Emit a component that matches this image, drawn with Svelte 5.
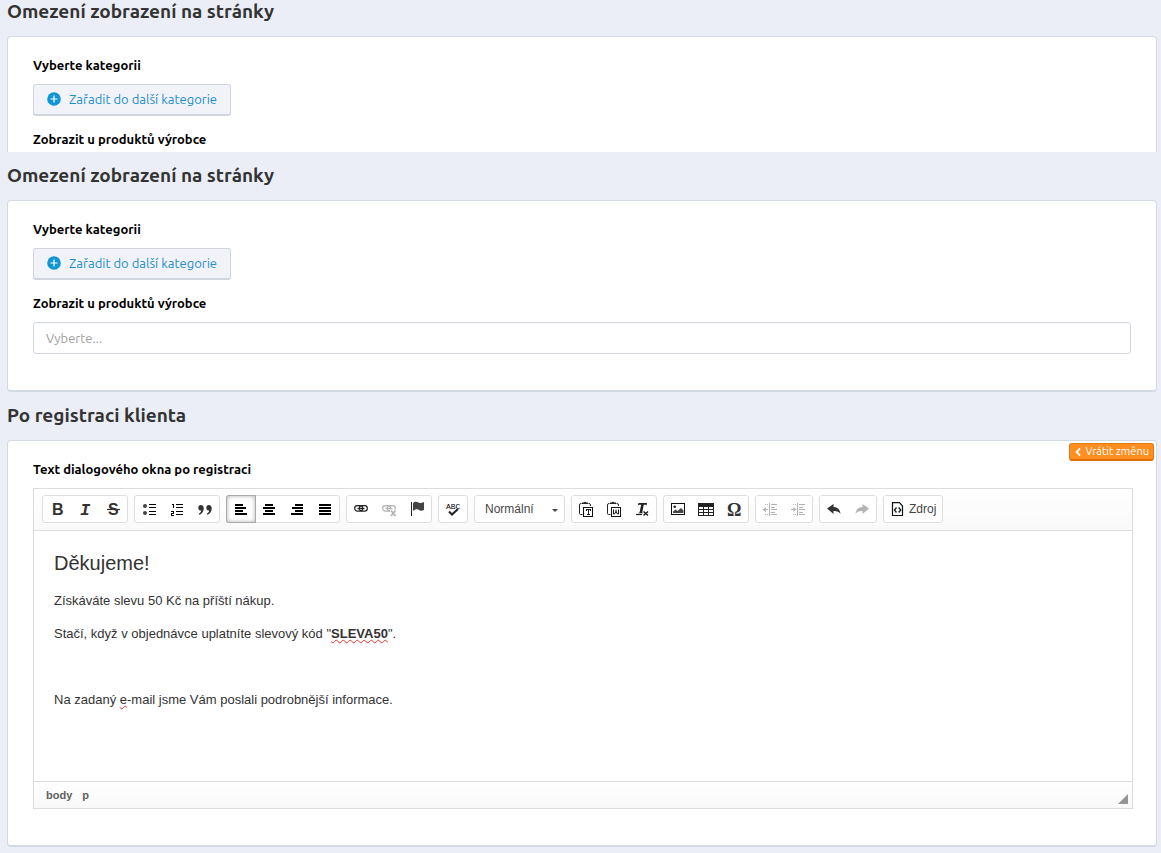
<script>
  const groups = [
    [['bold', 'Tučné'], ['italic', 'Kurzíva'], ['strike', 'Přeškrtnuté']],
    [['bullets', 'Odrážky'], ['numbers', 'Číslování'], ['quote', 'Citace']],
    [['left', 'Zarovnat vlevo'], ['center', 'Zarovnat na střed'], ['right', 'Zarovnat vpravo'], ['justify', 'Zarovnat do bloku']],
    [['link', 'Odkaz'], ['unlink', 'Odstranit odkaz', true], ['flag', 'Záložka']],
    [['spell', 'Kontrola pravopisu']],
    'format',
    [['pasteText', 'Vložit jako čistý text'], ['pasteWord', 'Vložit z Wordu'], ['clear', 'Odstranit formátování']],
    [['image', 'Obrázek'], ['table', 'Tabulka'], ['omega', 'Speciální znaky']],
    [['outdent', 'Zmenšit odsazení', true], ['indent', 'Zvětšit odsazení', true]],
    [['undo', 'Zpět'], ['redo', 'Znovu', true]],
    'source'
  ];
  const bars = {
    left: [[2, 8], [2, 11], [2, 8], [2, 12]],
    center: [[4, 8], [2, 12], [4, 8], [2, 12]],
    right: [[6, 8], [3, 11], [6, 8], [2, 12]],
    justify: [[2, 12], [2, 12], [2, 12], [2, 12]]
  };
</script>

{#snippet icon(name)}
  <svg class="icon" width="16" height="16" viewBox="0 0 16 16" aria-hidden="true">
    {#if name === 'bold'}
      <text class="sans" x="3" y="14" font-size="16">B</text>
    {:else if name === 'italic'}
      <text class="mono slant" x="3" y="14" font-size="17">I</text>
    {:else if name === 'strike'}
      <text class="sans" x="3" y="14" font-size="16">S</text>
      <path d="M2 8.500h13" stroke="#333" stroke-width="1.200" />
    {:else if name === 'bullets'}
      <circle cx="4" cy="5" r="2" fill="#444" /><circle cx="4" cy="12" r="2" fill="#444" />
      <path class="crisp" d="M8 3h7v1H8zM8 6h7v1H8zM8 10h7v1H8zM8 13h7v1H8z" fill="#000" />
    {:else if name === 'numbers'}
      <path class="crisp" d="M3 3h2v4H4V4H3zM2 10h3v3H3v1h2v1H2v-3h2v-1H2zM7 3h7v1H7zM7 6h7v1H7zM7 10h7v1H7zM7 13h7v1H7z" fill="#000" />
    {:else if name === 'quote'}
      <path d="M3.700 4c2 0 3 1.300 3 3.200 0 3.500-1.800 5.800-4.500 6.600l-.4-1c1.500-.8 2.300-1.800 2.400-3.200C2.500 9.700 1.300 8.600 1.300 6.700c0-1.600 1-2.700 2.400-2.700zM11.700 4c2 0 3 1.300 3 3.200 0 3.500-1.800 5.800-4.500 6.600l-.4-1c1.500-.8 2.300-1.800 2.400-3.200-1.700.1-2.900-1-2.900-2.900 0-1.600 1-2.700 2.400-2.700z" fill="#333" />
    {:else if bars[name]}
      {#each bars[name] as [x, w], i}
        <rect class="crisp" {x} y={3 + i * 3} width={w} height="2" fill="#000" />
      {/each}
    {:else if name === 'link' || name === 'unlink'}
      <g fill="none" stroke="currentColor" stroke-width="1.200">
        <rect x="1.700" y="4.700" width="8" height="5.500" rx="2.700" />
        <rect x="6.300" y="4.700" width="8" height="5.500" rx="2.700" />
        <path d="M4.500 7.500h7" stroke-width="1.300" />
      </g>
      {#if name === 'unlink'}
        <path d="M9 8.500h6.500V16H9z" fill="#fff" />
        <path d="M10 9.500l4.500 5.500M14.500 9.500L10 15" fill="none" stroke="currentColor" stroke-width="1.800" />
      {/if}
    {:else if name === 'flag'}
      <path class="crisp" d="M2 1h1v14H2z" />
      <path d="M4 2c2-2 4-1.500 5.500-.5S13 1.800 15 1v8c-2 1-4 .8-5.500-.2S6 8.500 4 10z" fill="#444" />
    {:else if name === 'spell'}
      <text class="abc" x="1" y="8" font-size="8">ABC</text>
      <path d="M4 10.500l3 3 6-5.500" fill="none" stroke="#222" stroke-width="2" />
    {:else if name === 'pasteText' || name === 'pasteWord'}
      <path d="M3.500 2.500H3q-1.500 0-1.500 1.500v8.500q0 1 1 1h2M12.500 5V4q0-1.500-1.500-1.500h-.5" fill="none" stroke="#222" />
      <path d="M4 3V1.500h1.800Q7 .2 8.200 1.500H10V3z" />
      <rect class="crisp" x="5.500" y="6.500" width="9" height="9" fill="#fff" stroke="#111" />
      {#if name === 'pasteText'}
        <path class="crisp" d="M8 8h5v2h-1V9h-1v4h1v1H9v-1h1V9H9v1H8z" />
      {:else}
        <path d="M7.500 8.500v4.500h1L10 10.500l1.500 2.500h1V8.500M10 8.500V11" fill="none" stroke="#111" />
      {/if}
    {:else if name === 'clear'}
      <path d="M4.500 2H13l-.5 2.500-1-.8H9.800L8.200 11.500l1 .8H4l1.500-.8L7.200 3.700H5.500L4 4.500z" />
      <path d="M2 13.500h6" stroke="#222" stroke-width="1.200" />
      <path d="M9.500 10.500l4.500 4M14 10.500l-4.500 4" stroke="#222" stroke-width="1.600" />
    {:else if name === 'image'}
      <rect class="crisp" x="1.500" y="2.500" width="13" height="11" fill="#fff" stroke="#111" />
      <circle cx="4.700" cy="5.700" r="1.300" />
      <path d="M3 12v-1.500l2.500-2 2 1.500L11 7l2.500 2.500V12z" fill="#444" />
    {:else if name === 'table'}
      <path class="crisp" d="M0 2h16v13H0zM1 6v2h4V6zM6 6v2h4V6zM11 6v2h4V6zM1 9v2h4V9zM6 9v2h4V9zM11 9v2h4V9zM1 12v2h4v-2zM6 12v2h4v-2zM11 12v2h4v-2z" fill-rule="evenodd" />
    {:else if name === 'omega'}
      <text class="serif" x="1" y="15" font-size="18">Ω</text>
    {:else if name === 'outdent' || name === 'indent'}
      <path class="crisp" d="M7 2h1v13H7zM9 3h6v1H9zM9 6h4v1H9zM9 8h6v1H9zM9 11h4v1H9zM9 13h6v1H9zM3 3h1v1H3zM5 3h1v1H5zM3 13h1v1H3zM5 13h1v1H5zM1 8h5v1H1z" />
      {#if name === 'outdent'}<path d="M4 6v5L.5 8.500z" />{:else}<path d="M3.500 6v5L6.500 8.500z" />{/if}
    {:else if name === 'undo'}
      <path d="M7.500 3v3c4 0 6.500 2.500 7 7-1.700-2.500-4-3.200-7-3v3L1 7.500z" fill="#333" />
    {:else if name === 'redo'}
      <path d="M8.500 3v3c-4 0-6.500 2.500-7 7 1.700-2.500 4-3.200 7-3v3L15 7.500z" />
    {:else if name === 'source'}
      <path d="M2.500 2v12.500h10V5L9.500 1.700H2.500z" fill="none" stroke="#111" stroke-width="1.200" />
      <path d="M6.500 6.500L4.500 9l2 2.500M8.700 6.500l2 2.500-2 2.500" fill="none" stroke="#222" stroke-width="1.400" />
    {/if}
  </svg>
{/snippet}

{#snippet category()}
  <h3>Vyberte kategorii</h3>
  <button class="add" type="button">
    <svg width="14" height="14" viewBox="0 0 14 14" aria-hidden="true">
      <circle cx="7" cy="7" r="6.800" fill="#0f97d3" />
      <path d="M7 3.500v7M3.500 7h7" stroke="#fff" stroke-width="1.200" />
    </svg>
    Zařadit do další kategorie
  </button>
{/snippet}

<main>
  <section>
    <h2>Omezení zobrazení na stránky</h2>
    <div class="card cut">
      {@render category()}
      <h3>Zobrazit u produktů výrobce</h3>
    </div>
  </section>

  <section>
    <h2>Omezení zobrazení na stránky</h2>
    <div class="card">
      {@render category()}
      <label for="maker">Zobrazit u produktů výrobce</label>
      <input id="maker" type="text" placeholder="Vyberte..." />
    </div>
  </section>

  <section>
    <h2>Po registraci klienta</h2>
    <div class="card">
      <button class="revert" type="button">
        <svg width="6" height="10" viewBox="0 0 6 10" aria-hidden="true"><path d="M5 1.500L1.500 5 5 8.500" fill="none" stroke="#fff" stroke-width="1.800" /></svg>
        Vrátit změnu
      </button>
      <h3 id="editor-label">Text dialogového okna po registraci</h3>
      <div class="editor">
        <div class="toolbar" role="toolbar" aria-label="Formátování">
          {#each groups as group}
            {#if group === 'format'}
              <div class="group format">
                <select aria-label="Formát"><option>Normální</option></select>
                <svg width="6" height="3" viewBox="0 0 6 3" aria-hidden="true"><path d="M0 0h6L3 3z" fill="#474747" /></svg>
              </div>
            {:else if group === 'source'}
              <div class="group"><button class="tool source" type="button">{@render icon('source')}Zdroj</button></div>
            {:else}
              <div class="group">
                {#each group as [name, title, off]}
                  <button class="tool" class:active={name === 'left'} type="button" aria-label={title} disabled={off}>{@render icon(name)}</button>
                {/each}
              </div>
            {/if}
          {/each}
        </div>
        <div class="content" contenteditable="true" spellcheck="false" role="textbox" tabindex="0" aria-multiline="true" aria-labelledby="editor-label">
          <h1>Děkujeme!</h1>
          <p>Získáváte slevu 50 Kč na příští nákup.</p>
          <p>Stačí, když v objednávce uplatníte slevový kód "<strong class="typo">SLEVA50</strong>".</p>
          <p>&nbsp;</p>
          <p>Na zadaný <span class="typo">e</span>-mail jsme Vám poslali podrobnější informace.</p>
        </div>
        <div class="status">
          <a href="#body">body</a><a href="#p">p</a>
          <svg width="10" height="10" viewBox="0 0 10 10" aria-hidden="true"><path d="M10 0v10H0z" fill="#949494" /></svg>
        </div>
      </div>
    </div>
  </section>
</main>

<style>
  :global(body) {
    background: #ebeef6;
  }
  main {
    display: flex;
    flex-direction: column;
    gap: 12px;
    padding: 0 4px 6px 7px;
    font-family: Ubuntu, 'Noto Sans', sans-serif;
    font-size: 13px;
    line-height: 20px;
    color: #000;
  }
  h2 {
    margin: 0 0 14px;
    font-size: 19px;
    font-weight: 700;
    line-height: 22px;
    color: #333;
  }
  .card {
    position: relative;
    padding: 18px 25px 36px;
    border: 1px solid #d3dae3;
    border-bottom-width: 2px;
    border-radius: 4px;
    background: #fff;
  }
  .cut {
    padding-bottom: 3px;
    border-bottom: 0;
    border-radius: 4px 4px 0 0;
  }
  h3,
  label {
    display: block;
    margin: 0 0 9px;
    font-size: 13px;
    font-weight: 700;
    line-height: 20px;
  }
  .cut h3:last-child {
    margin-bottom: 0;
  }
  .add {
    display: flex;
    align-items: center;
    gap: 8px;
    height: 32px;
    margin: 0 0 13px;
    padding: 0 13px 2px;
    border: 1px solid #d0d5de;
    border-bottom-width: 2px;
    border-radius: 3px;
    background: #f2f3f8;
    color: #1f8ecb;
    font: inherit;
    line-height: 20px;
  }
  input {
    display: block;
    box-sizing: border-box;
    width: 100%;
    height: 32px;
    padding: 0 12px;
    border: 1px solid #d3d8e0;
    border-radius: 3px;
    background: #fff;
    font: inherit;
  }
  input::placeholder {
    color: #a0a0a0;
    opacity: 1;
  }
  .revert {
    position: absolute;
    top: 2px;
    right: 2px;
    display: flex;
    align-items: center;
    gap: 4px;
    height: 18px;
    padding: 0 4px 0 5px;
    border: 1px solid #e67a0a;
    border-bottom: 2px solid #df6f00;
    border-radius: 3px;
    background: #ff8e20;
    color: #fff;
    font: inherit;
    font-size: 11px;
    line-height: 15px;
    white-space: nowrap;
  }
  .editor {
    margin-right: -2px;
    border: 1px solid #dcdcdc;
    font-family: 'Liberation Sans', Arial, sans-serif;
    color: #333;
  }
  .toolbar {
    display: flex;
    flex-wrap: wrap;
    gap: 6px;
    padding: 6px 8px 7px;
    border-bottom: 1px solid #dcdcdc;
    background: linear-gradient(#fff, #f9f9f9);
  }
  .group {
    display: flex;
    box-sizing: border-box;
    height: 28px;
    border: 1px solid #dedede;
    border-radius: 3px;
    background: #fff;
  }
  .tool {
    display: flex;
    align-items: center;
    justify-content: center;
    width: 28px;
    padding: 0;
    border: 0;
    background: none;
    color: #222;
    font: inherit;
    font-size: 12px;
  }
  .tool:disabled {
    color: #b3b3b3;
  }
  .active {
    box-shadow: 0 0 0 1px #aaa, inset 0 0 4px #b0b0b0;
    border-radius: 2px 0 0 2px;
  }
  .source {
    gap: 3px;
    width: auto;
    padding: 0 6px;
    color: #444;
  }
  .icon {
    display: block;
    flex: none;
    overflow: visible;
    fill: currentColor;
  }
  .icon text {
    font-family: 'Liberation Sans', sans-serif;
    font-weight: 700;
    fill: #333;
  }
  .icon .mono {
    font-family: 'Liberation Mono', monospace;
  }
  .icon .serif {
    font-family: 'Liberation Serif', serif;
  }
  .icon .slant {
    font-style: italic;
  }
  .icon .abc {
    font-family: 'Liberation Mono', monospace;
    font-weight: 400;
    fill: #000;
  }
  .crisp {
    shape-rendering: crispEdges;
  }
  .format {
    position: relative;
    width: 91px;
  }
  select {
    width: 100%;
    padding: 0 20px 0 10px;
    border: 0;
    background: none;
    appearance: none;
    color: #474747;
    font: inherit;
    font-size: 12px;
  }
  .format svg {
    position: absolute;
    top: 13px;
    right: 6px;
    pointer-events: none;
  }
  .content {
    min-height: 210px;
    padding: 20px;
    font-size: 13px;
    line-height: 20px;
    outline: none;
  }
  h1 {
    margin: 0 0 16px;
    font-size: 20px;
    font-weight: 400;
    line-height: 24px;
  }
  p {
    margin: 0 0 13px;
  }
  .typo {
    text-decoration: underline wavy #e33 1px;
    text-decoration-skip-ink: none;
    text-underline-offset: 1px;
  }
  .status {
    display: flex;
    align-items: center;
    gap: 10px;
    height: 26px;
    padding: 0 4px 0 12px;
    border-top: 1px solid #dcdcdc;
    background: linear-gradient(#fff, #f8f8f8);
  }
  .status a {
    color: #606060;
    font-size: 11px;
    font-weight: 700;
    text-decoration: none;
  }
  .status svg {
    align-self: flex-end;
    margin: 0 0 4px auto;
  }
</style>
